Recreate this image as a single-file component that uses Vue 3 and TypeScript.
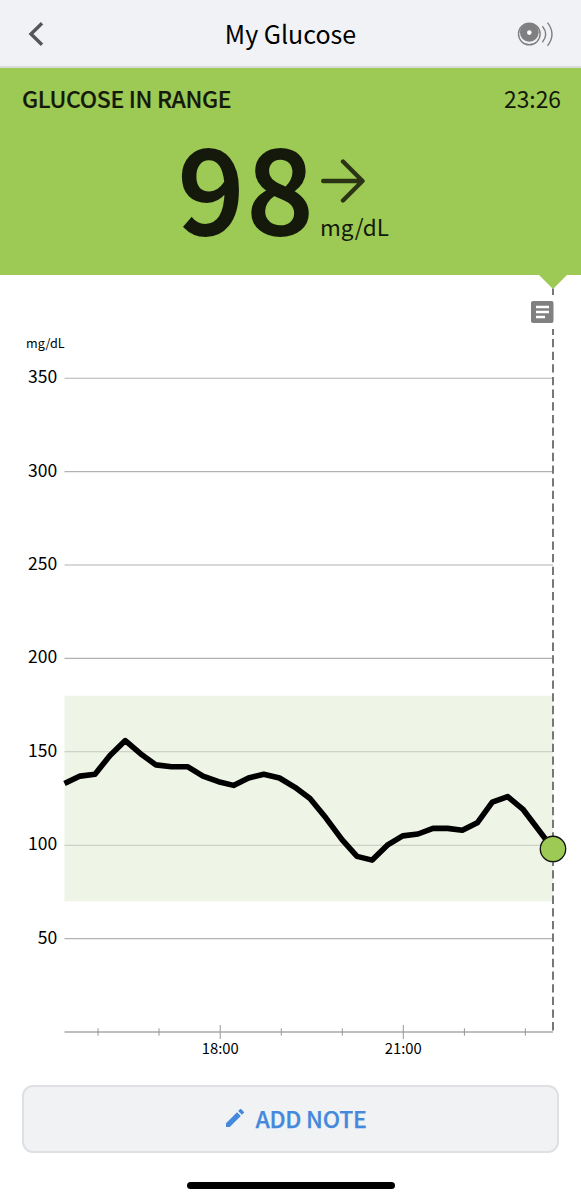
<script setup lang="ts">
interface Tick {
  x: number
  label?: string
}

const LEFT = 64.5
const RIGHT = 553
const BASE = 757
const SCALE = 1.868

const yFor = (value: number): number => BASE - value * SCALE

const levels: number[] = [350, 300, 250, 200, 150, 100, 50]

const inRange = (value: number): boolean => value >= 70 && value <= 180

const ticks: Tick[] = [
  { x: 98 },
  { x: 159 },
  { x: 220.2, label: '18:00' },
  { x: 281.3 },
  { x: 342.3 },
  { x: 403.3, label: '21:00' },
  { x: 464.4 },
  { x: 525.4 },
]

// [x position, glucose in mg/dL]
const readings: [number, number][] = [
  [64.5, 133], [80, 137], [95, 138], [110, 148], [125.3, 156], [140.5, 149],
  [156, 143], [171.5, 142], [187.5, 142], [203, 137], [218.5, 134], [233.5, 132],
  [248.5, 136], [263.8, 138], [279.5, 136], [295, 131], [310, 125], [326, 114.5],
  [342, 103], [357, 94], [372.2, 92], [387.3, 100], [402.7, 105], [418, 106],
  [433, 109], [447.5, 109], [462.3, 108], [477.3, 112], [492.3, 123],
  [507.7, 126], [523.3, 119], [553, 98],
]

const trace = readings.map(([x, v]) => `${x},${yFor(v).toFixed(1)}`).join(' ')
</script>

<template>
  <main class="screen">
    <header class="bar">
      <svg class="back" width="16" height="26" viewBox="0 0 16 26">
        <path d="M14 2.2 L3 13 L14 23.8" />
      </svg>
      <h1 class="title">My Glucose</h1>
      <svg class="sensor" width="38" height="28" viewBox="0 0 38 28">
        <circle class="ring" cx="12.3" cy="14" r="10.8" />
        <circle class="disc" cx="12.3" cy="12.3" r="9.4" />
        <circle class="hole" cx="12.3" cy="12.6" r="2.3" />
        <path class="wave" d="M25.4 6.2 Q32 14.2 25.4 22.2 M30.5 2.6 Q39.5 14.2 30.5 25.8" />
      </svg>
    </header>

    <section class="status">
      <div class="status-row">
        <span class="state">GLUCOSE IN RANGE</span>
        <time class="clock">23:26</time>
      </div>
      <div class="reading">
        <span class="value">98</span>
        <div class="side">
          <svg class="trend" width="44" height="46" viewBox="0 0 44 46">
            <path d="M2.2 23 H41 M22 3.5 L41.5 23 L22 42.5" />
          </svg>
          <span class="unit">mg/dL</span>
        </div>
      </div>
    </section>

    <svg class="chart" width="581" height="795" viewBox="0 0 581 795">
      <path class="pointer" d="M539 0 H567 L553 14 Z" />
      <text class="axis-unit" x="26" y="73">mg/dL</text>

      <rect class="range" :x="LEFT" :y="yFor(180)" :width="RIGHT - LEFT" :height="110 * SCALE" />

      <g v-for="level in levels" :key="level">
        <line
          class="grid"
          :class="{ soft: inRange(level) }"
          :x1="LEFT"
          :x2="RIGHT"
          :y1="yFor(level)"
          :y2="yFor(level)"
        />
        <text class="level" x="57.2" :y="yFor(level) + 4.9">{{ level }}</text>
      </g>

      <line class="base" :x1="LEFT" :x2="RIGHT" :y1="BASE" :y2="BASE" />
      <g v-for="tick in ticks" :key="tick.x">
        <line
          class="tick"
          :x1="tick.x"
          :x2="tick.x"
          :y1="BASE - (tick.label ? 7 : 3.7)"
          :y2="BASE + (tick.label ? 7 : 3.7)"
        />
        <text v-if="tick.label" class="hour" :x="tick.x" y="779">{{ tick.label }}</text>
      </g>

      <path class="now" d="M553 13.5 V20 M553 54 V60" />
      <path class="now dashed" d="M553 64 V755.5" />

      <g class="note">
        <rect x="531" y="26" width="22.5" height="22" rx="2" />
        <path d="M536 32 H549 M536 37 H549 M536 42 H545" />
      </g>

      <polyline class="trace" :points="trace" />
      <circle class="current" cx="553" :cy="yFor(98)" r="12.7" />
    </svg>

    <button class="add" type="button">
      <svg class="pencil" width="18" height="18" viewBox="3 3 18 18">
        <path d="M3 17.25V21h3.75L17.81 9.94l-3.75-3.75L3 17.25zM20.71 7.04a1 1 0 0 0 0-1.41l-2.34-2.34a1 1 0 0 0-1.41 0l-1.83 1.83 3.75 3.75 1.83-1.83z" />
      </svg>
      <span>ADD NOTE</span>
    </button>

    <div class="home"></div>
  </main>
</template>

<style>
body {
  margin: 0;
  background: #fff;
}
</style>

<style scoped>
.screen {
  width: 581px;
  height: 1200px;
  overflow: hidden;
  display: flex;
  flex-direction: column;
  background: #fff;
  color: #000;
  font-family: "Noto Sans CJK SC", "Noto Sans CJK JP", sans-serif;
}
.bar {
  box-sizing: border-box;
  height: 68px;
  flex: none;
  display: grid;
  grid-template-columns: 1fr auto 1fr;
  align-items: center;
  padding: 2px 27px 0 27px;
  background: #f1f2f5;
  border-bottom: 2px solid #d8dbd9;
}
.back {
  margin-left: 1px;
}
.back path {
  fill: none;
  stroke: #54565a;
  stroke-width: 3.4;
}
.title {
  margin: 0;
  padding-bottom: 2px;
  font-size: 25px;
  font-weight: 400;
  line-height: 36px;
}
.sensor {
  justify-self: end;
  margin-right: -1px;
}
.ring, .wave {
  fill: none;
  stroke: #7f7f81;
  stroke-width: 1.4;
}
.disc {
  fill: #7f7f81;
}
.hole {
  fill: #fff;
}
.status {
  height: 207px;
  flex: none;
  background: #9dca54;
  color: #14190b;
}
.status-row {
  display: flex;
  justify-content: space-between;
  padding: 12px 20px 0 22px;
  line-height: 36px;
}
.state {
  font-size: 23px;
  font-weight: 500;
  letter-spacing: -0.33px;
  -webkit-text-stroke: 0.2px currentColor;
}
.clock {
  padding-top: 1px;
  font-size: 22.8px;
}
.reading {
  display: flex;
  padding-left: 178px;
  height: 130px;
}
.value {
  width: 142px;
  font-size: 116px;
  font-weight: 500;
  line-height: 133px;
  letter-spacing: 3px;
  -webkit-text-stroke: 2px currentColor;
}
.side {
  display: flex;
  flex-direction: column;
  padding-top: 41px;
}
.trend {
  margin-left: 1px;
}
.trend path {
  fill: none;
  stroke: #2a3415;
  stroke-width: 4.4;
  stroke-linecap: round;
  stroke-linejoin: round;
}
.unit {
  font-size: 22.5px;
  line-height: 36px;
  margin-top: 4px;
}
.chart {
  display: block;
  flex: none;
}
.pointer {
  fill: #9dca54;
}
.axis-unit {
  font-size: 12.6px;
}
.range {
  fill: #eef4e6;
}
.grid {
  stroke: #b2b2b2;
  stroke-width: 1.1;
}
.grid.soft {
  stroke: #c3c9bd;
}
.level {
  font-size: 17.5px;
  text-anchor: end;
}
.base {
  stroke: #aaa;
  stroke-width: 1.6;
}
.tick {
  stroke: #999;
  stroke-width: 1;
}
.hour {
  font-size: 14.8px;
  text-anchor: middle;
}
.now {
  fill: none;
  stroke: #777;
  stroke-width: 2;
}
.dashed {
  stroke-dasharray: 8.3 4.35;
}
.note rect {
  fill: #808080;
}
.note path {
  stroke: #fff;
  stroke-width: 2.3;
}
.trace {
  fill: none;
  stroke: #000;
  stroke-width: 5.6;
  stroke-linejoin: round;
}
.current {
  fill: #9dca54;
  stroke: #111;
  stroke-width: 1.3;
}
.add {
  box-sizing: border-box;
  flex: none;
  width: 537px;
  height: 68px;
  margin: 15px 0 0 22px;
  padding: 0 0 2px 12px;
  display: flex;
  align-items: center;
  justify-content: center;
  gap: 11px;
  border: 2px solid #dfe0e3;
  border-radius: 11px;
  background: #f1f2f4;
  color: #4489db;
  font-family: inherit;
  font-size: 23px;
  font-weight: 500;
  line-height: 36px;
  letter-spacing: -0.25px;
  -webkit-text-stroke: 0.25px currentColor;
}
.pencil {
  fill: #4489db;
}
.home {
  flex: none;
  width: 208px;
  height: 7px;
  margin: 29px 0 0 187px;
  border-radius: 4px;
  background: #000;
}
</style>
